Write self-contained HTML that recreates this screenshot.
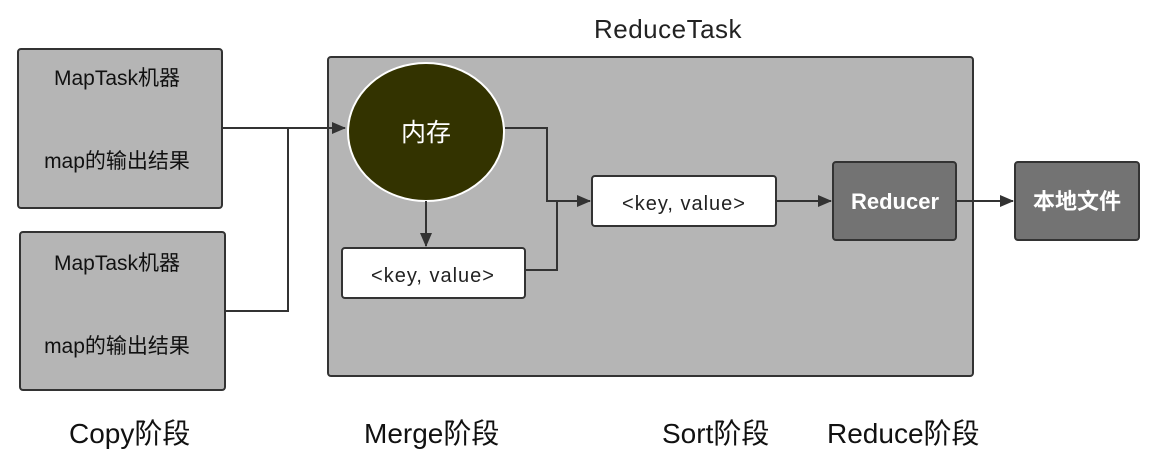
<!DOCTYPE html>
<html><head><meta charset="utf-8"><style>
body{margin:0;background:#fff;width:1157px;height:463px;overflow:hidden}
text{font-family:"Liberation Sans","Noto Sans CJK SC",sans-serif}
</style></head><body>
<svg width="1157" height="463" viewBox="0 0 1157 463" xmlns="http://www.w3.org/2000/svg">
<defs><marker id="a" markerWidth="14" markerHeight="12" refX="13" refY="6" orient="auto" markerUnits="userSpaceOnUse"><path d="M0,0 L14,6 L0,12 Z" fill="#333"/></marker></defs>
<text x="668" y="38" font-size="26" text-anchor="middle" fill="#222" letter-spacing="0.5">ReduceTask</text>
<rect x="18" y="49" width="204" height="159" rx="3" fill="#b5b5b5" stroke="#333" stroke-width="2"/>
<rect x="20" y="232" width="205" height="158" rx="3" fill="#b5b5b5" stroke="#333" stroke-width="2"/>
<text x="117" y="85" font-size="21" text-anchor="middle" fill="#111">MapTask机器</text>
<text x="117" y="168" font-size="21" text-anchor="middle" fill="#111">map的输出结果</text>
<text x="117" y="270" font-size="21" text-anchor="middle" fill="#111">MapTask机器</text>
<text x="117" y="353" font-size="21" text-anchor="middle" fill="#111">map的输出结果</text>
<rect x="328" y="57" width="645" height="319" rx="3" fill="#b5b5b5" stroke="#333" stroke-width="2"/>
<path d="M222,128 H345" stroke="#333" stroke-width="2" fill="none" marker-end="url(#a)"/>
<path d="M225,311 H288 V128" stroke="#333" stroke-width="2" fill="none"/>
<ellipse cx="426" cy="132" rx="78" ry="69" fill="#333300" stroke="#fff" stroke-width="2"/>
<text x="426" y="141" font-size="25" text-anchor="middle" fill="#fff">内存</text>
<path d="M426,201 V246" stroke="#333" stroke-width="2" fill="none" marker-end="url(#a)"/>
<path d="M505,128 H547 V201 H590" stroke="#333" stroke-width="2" fill="none" marker-end="url(#a)"/>
<path d="M525,270 H557 V201" stroke="#333" stroke-width="2" fill="none"/>
<rect x="342" y="248" width="183" height="50" rx="3" fill="#fff" stroke="#333" stroke-width="2"/>
<text x="433" y="282" font-size="20" text-anchor="middle" fill="#222" letter-spacing="1">&lt;key, value&gt;</text>
<rect x="592" y="176" width="184" height="50" rx="3" fill="#fff" stroke="#333" stroke-width="2"/>
<text x="684" y="210" font-size="20" text-anchor="middle" fill="#222" letter-spacing="1">&lt;key, value&gt;</text>
<path d="M776,201 H831" stroke="#333" stroke-width="2" fill="none" marker-end="url(#a)"/>
<rect x="833" y="162" width="123" height="78" rx="3" fill="#737373" stroke="#333" stroke-width="2"/>
<text x="895" y="209" font-size="22" font-weight="bold" text-anchor="middle" fill="#fff">Reducer</text>
<path d="M956,201 H1013" stroke="#333" stroke-width="2" fill="none" marker-end="url(#a)"/>
<rect x="1015" y="162" width="124" height="78" rx="3" fill="#737373" stroke="#333" stroke-width="2"/>
<text x="1077" y="209" font-size="22" font-weight="bold" text-anchor="middle" fill="#fff">本地文件</text>
<g font-size="28" fill="#111">
<text x="69" y="443">Copy阶段</text>
<text x="364" y="443">Merge阶段</text>
<text x="662" y="443">Sort阶段</text>
<text x="827" y="443">Reduce阶段</text>
</g>
</svg>
</body></html>
